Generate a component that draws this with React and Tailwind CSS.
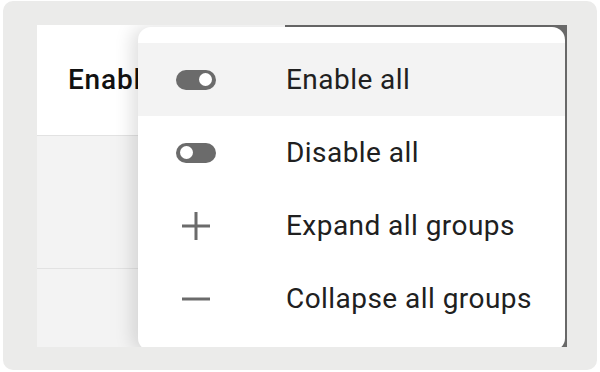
import React from "react";

const Toggle = ({ on }) => (
  <div className="w-[40px] h-[20px] rounded-full bg-[#6b6b6b] flex items-center px-[4px]" style={{ justifyContent: on ? "flex-end" : "flex-start" }}>
    <div className="w-[13px] h-[13px] rounded-full bg-white" />
  </div>
);

const Plus = () => (
  <svg width="30" height="30" viewBox="0 0 30 30">
    <path d="M15 1v28M1 15h28" stroke="#6b6b6b" strokeWidth="3" fill="none" />
  </svg>
);

const Minus = () => (
  <svg width="30" height="30" viewBox="0 0 30 30">
    <path d="M1 15h28" stroke="#6b6b6b" strokeWidth="3" fill="none" />
  </svg>
);

const items = [
  { label: "Enable all", icon: <Toggle on />, active: true },
  { label: "Disable all", icon: <Toggle /> },
  { label: "Expand all groups", icon: <Plus /> },
  { label: "Collapse all groups", icon: <Minus /> },
];

const App = () => {
  return (
    <div className="w-[600px] h-[372px] bg-white pt-[1px] pl-[3px]" style={{ fontFamily: "Roboto, 'Noto Sans', sans-serif" }}>
      <div className="w-[594px] h-[369px] rounded-[10px] bg-[#ebebea] pt-[24px] pl-[34px]">
        <div className="relative w-[530px] h-[322px] overflow-hidden bg-[#f3f3f3]">
          {/* table behind the menu */}
          <div className="h-[111px] bg-white border-b border-[#e2e2e2] flex items-center pl-[31px]">
            <span className="text-[28px] font-medium text-[#111] tracking-[0.8px]">Enabled</span>
          </div>
          <div className="h-[133px] border-b border-[#e2e2e2]" />
          <div className="absolute left-[248px] top-0 right-0 bottom-0 bg-[#6b6b6b]" />

          {/* menu */}
          <div className="absolute left-[101px] top-[2px] right-[2px] bottom-[-4px] bg-white rounded-[13px] pt-[16px] shadow-[-6px_0_18px_rgba(0,0,0,0.13)]">
            {items.map((item) => (
              <div
                key={item.label}
                className={`h-[73px] flex items-center ${item.active ? "bg-[#f3f3f3]" : ""}`}
              >
                <div className="w-[116px] flex justify-center shrink-0">{item.icon}</div>
                <span className="pl-[32px] text-[28px] text-[#202020] tracking-[0.45px]">{item.label}</span>
              </div>
            ))}
          </div>
        </div>
      </div>
    </div>
  );
};

export default App;
